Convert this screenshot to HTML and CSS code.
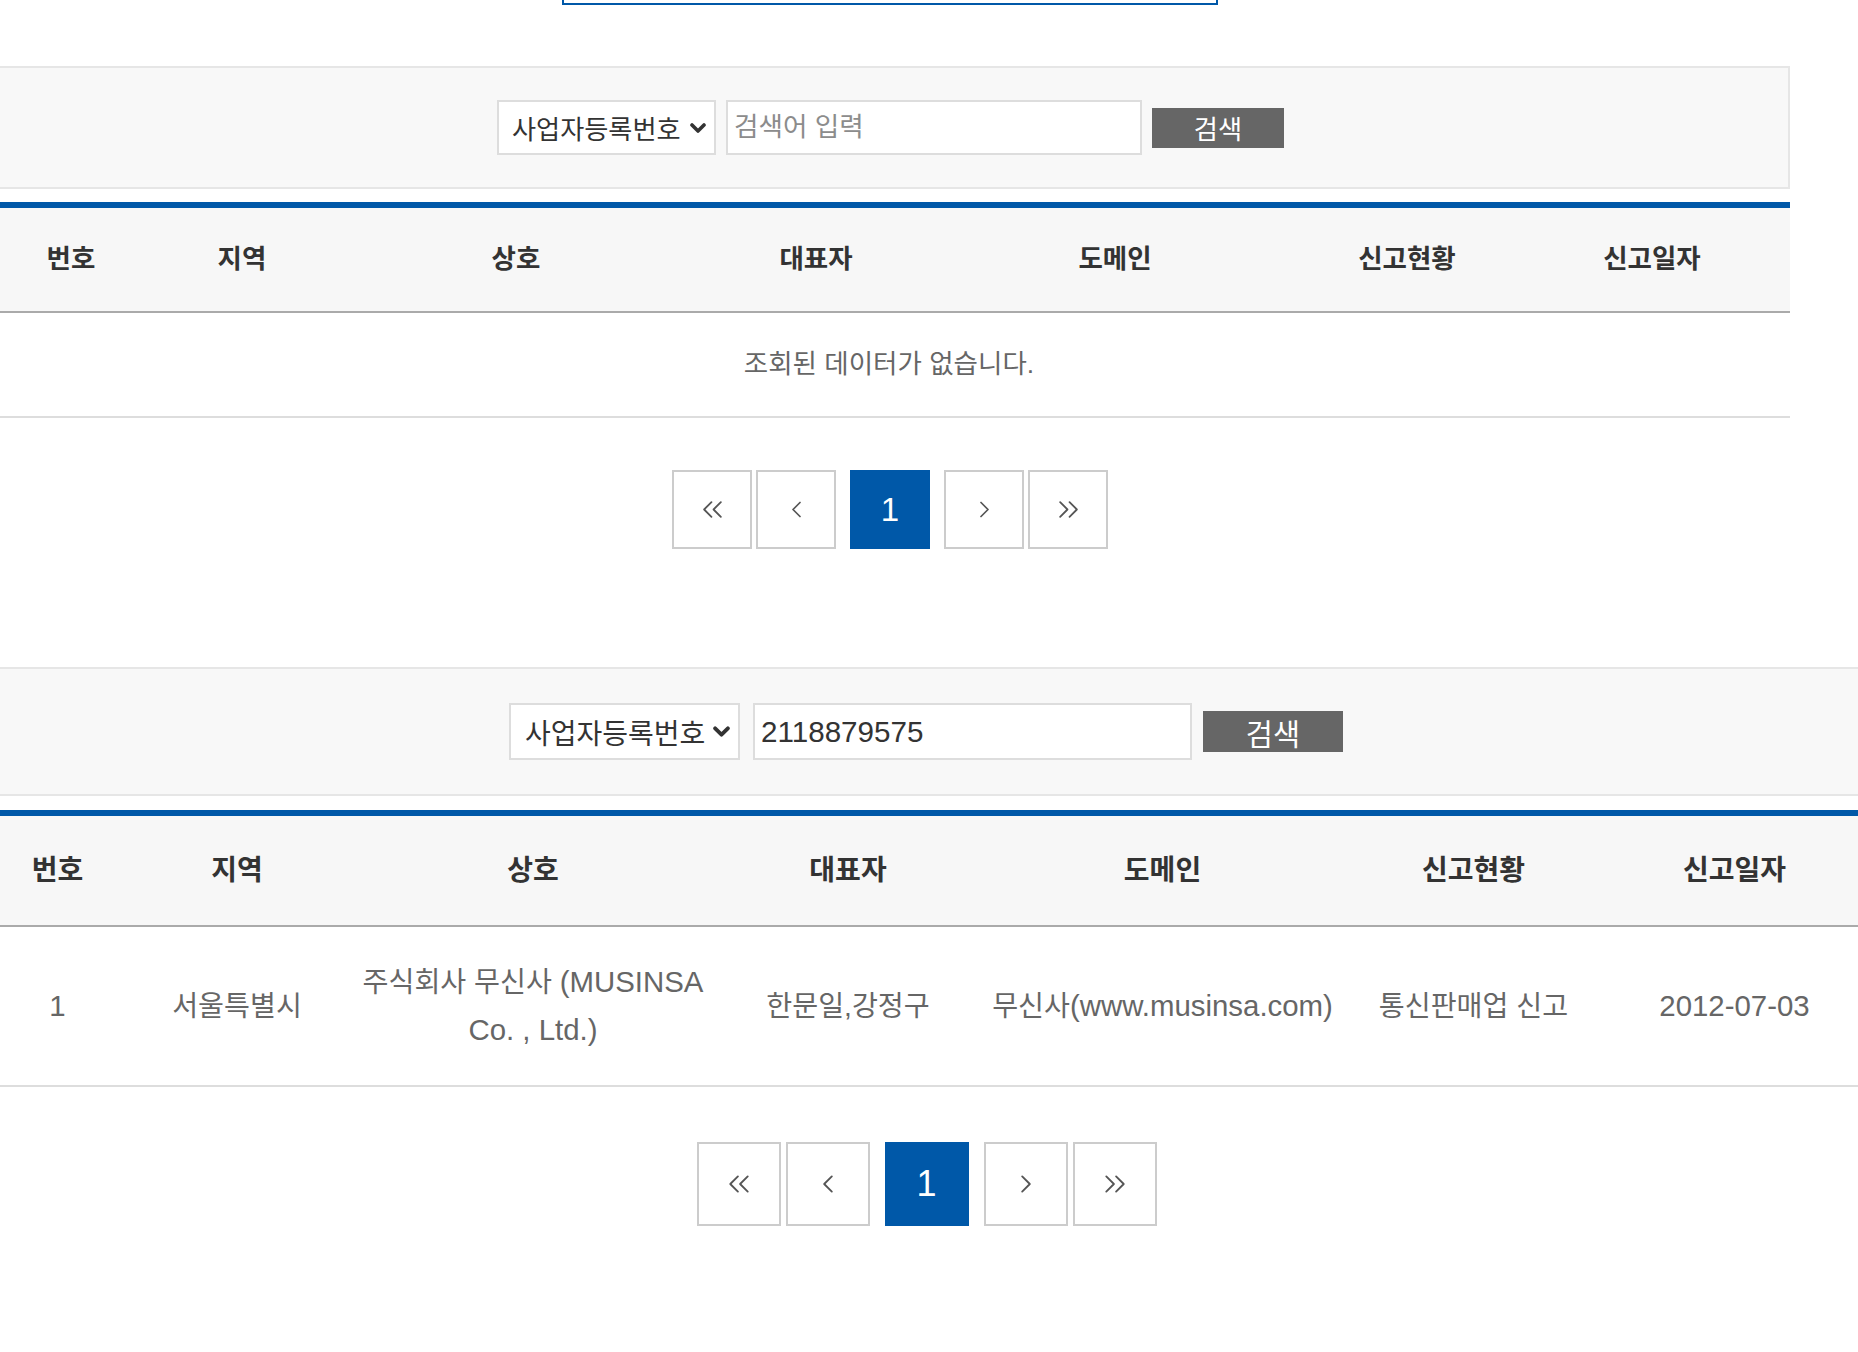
FILE: index.html
```html
<!DOCTYPE html>
<html lang="ko">
<head>
<meta charset="utf-8">
<title>통신판매사업자 조회</title>
<link rel="stylesheet" href="styles.css">
</head>
<body>
<div class="page">
  <div class="topfield"></div>

  <section class="board board-a">
    <div class="search">
      <div class="select"><span>사업자등록번호</span><svg class="caret" viewBox="0 0 16 10"><polyline points="2,2 8,8 14,2"/></svg></div>
      <input class="keyword" type="text" placeholder="검색어 입력">
      <button class="btn-search" type="button">검색</button>
    </div>
    <table class="list">
      <colgroup><col class="c1"><col class="c2"><col class="c3"><col class="c4"><col class="c5"><col class="c6"><col class="c7"></colgroup>
      <thead>
        <tr><th>번호</th><th>지역</th><th>상호</th><th>대표자</th><th>도메인</th><th>신고현황</th><th>신고일자</th></tr>
      </thead>
      <tbody>
        <tr><td class="empty" colspan="7">조회된 데이터가 없습니다.</td></tr>
      </tbody>
    </table>
    <nav class="pager">
      <a class="pg"><svg class="dbl" viewBox="0 0 22 16"><polyline points="10,1 3,8 10,15"/><polyline points="19,1 12,8 19,15"/></svg></a>
      <a class="pg"><svg class="sgl" viewBox="0 0 11 16"><polyline points="9,1 2,8 9,15"/></svg></a>
      <a class="pg on">1</a>
      <a class="pg"><svg class="sgl" viewBox="0 0 11 16"><polyline points="2,1 9,8 2,15"/></svg></a>
      <a class="pg"><svg class="dbl" viewBox="0 0 22 16"><polyline points="3,1 10,8 3,15"/><polyline points="12,1 19,8 12,15"/></svg></a>
    </nav>
  </section>

  <section class="board board-b">
    <div class="search">
      <div class="select"><span>사업자등록번호</span><svg class="caret" viewBox="0 0 16 10"><polyline points="2,2 8,8 14,2"/></svg></div>
      <input class="keyword" type="text" placeholder="검색어 입력" value="2118879575">
      <button class="btn-search" type="button">검색</button>
    </div>
    <table class="list">
      <colgroup><col class="c1"><col class="c2"><col class="c3"><col class="c4"><col class="c5"><col class="c6"><col class="c7"></colgroup>
      <thead>
        <tr><th>번호</th><th>지역</th><th>상호</th><th>대표자</th><th>도메인</th><th>신고현황</th><th>신고일자</th></tr>
      </thead>
      <tbody>
        <tr>
          <td><span class="en">1</span></td>
          <td>서울특별시</td>
          <td><span class="line">주식회사 무신사 <span class="en">(MUSINSA</span></span> <span class="line en">Co. , Ltd.)</span></td>
          <td>한문일,강정구</td>
          <td>무신사<span class="en">(www.musinsa.com)</span></td>
          <td>통신판매업 신고</td>
          <td><span class="en">2012-07-03</span></td>
        </tr>
      </tbody>
    </table>
    <nav class="pager">
      <a class="pg"><svg class="dbl" viewBox="0 0 22 16"><polyline points="10,1 3,8 10,15"/><polyline points="19,1 12,8 19,15"/></svg></a>
      <a class="pg"><svg class="sgl" viewBox="0 0 11 16"><polyline points="9,1 2,8 9,15"/></svg></a>
      <a class="pg on">1</a>
      <a class="pg"><svg class="sgl" viewBox="0 0 11 16"><polyline points="2,1 9,8 2,15"/></svg></a>
      <a class="pg"><svg class="dbl" viewBox="0 0 22 16"><polyline points="3,1 10,8 3,15"/><polyline points="12,1 19,8 12,15"/></svg></a>
    </nav>
  </section>
</div>
</body>
</html>
```
FILE: styles.css
```css
html, body {
  margin: 0;
  padding: 0;
  background: #fff;
}
body {
  font-family: "Liberation Sans", "Noto Sans CJK KR", sans-serif;
  color: #333;
}
.page {
  width: 1858px;
  padding-bottom: 128px;
}

/* remnant of the field above */
.topfield {
  box-sizing: border-box;
  width: 656px;
  height: 5px;
  margin-left: 562px;
  border: 2px solid #0058a8;
  border-top: 0;
}

/* sections */
.board-a { width: 1790px; margin-top: 61px; }
.board-b { width: 1858px; margin-top: 118px; }

/* search bar */
.search {
  box-sizing: border-box;
  display: flex;
  justify-content: center;
  align-items: center;
  background: #f8f8f8;
  border-top: 2px solid #e6e6e6;
  border-bottom: 2px solid #e6e6e6;
}
.board-a .search {
  height: 123px;
  border-right: 2px solid #e6e6e6;
  padding-right: 7px;
  gap: 10px;
}
.board-b .search {
  height: 129px;
  padding-right: 6px;
}
.board-b .keyword { margin-left: 13px; }
.board-b .btn-search { margin-left: 11px; }

.select {
  box-sizing: border-box;
  display: flex;
  align-items: center;
  justify-content: space-between;
  background: #fff;
  border: 2px solid #ddd;
  color: #333;
  white-space: nowrap;
}
.caret {
  flex: none;
  width: 16px;
  height: 10px;
  fill: none;
  stroke: #333;
  stroke-width: 3.6;
  stroke-linecap: round;
  stroke-linejoin: round;
}
.board-a .select { width: 219px; height: 55px; padding: 0 8px 0 13px; font-size: 26.2px; }
.board-b .select { width: 231px; height: 57px; padding: 0 8px 0 14px; font-size: 28px; }
.board-b .caret { width: 17px; height: 11px; }

.keyword {
  box-sizing: border-box;
  margin: 0;
  border: 2px solid #ddd;
  background: #fff;
  padding: 0 6px;
  font-family: inherit;
  color: #333;
  outline: none;
}
.keyword::placeholder { color: #8c8c8c; }
.board-a .keyword { width: 416px; height: 55px; font-size: 26.6px; }
.board-b .keyword { width: 439px; height: 57px; font-size: 29.6px; }

.btn-search {
  margin: 0;
  padding: 0;
  border: 0;
  background: #666;
  color: #fff;
  font-family: inherit;
}
.board-a .btn-search { width: 132px; height: 40px; font-size: 26.3px; }
.board-b .btn-search { width: 140px; height: 41px; font-size: 29.5px; }

/* table */
.list {
  border-collapse: separate;
  border-spacing: 0;
  table-layout: fixed;
  border-top: 6px solid #0058a8;
}
.board-a .list { width: 1790px; margin-top: 13px; }
.board-b .list { width: 1858px; margin-top: 14px; }

.board-a .c1 { width: 142px; }
.board-a .c2 { width: 200px; }
.board-a .c3 { width: 348px; }
.board-a .c4 { width: 252px; }
.board-a .c5 { width: 346px; }
.board-a .c6 { width: 238px; }
.board-a .c7 { width: 264px; }

.board-b .c1 { width: 115px; }
.board-b .c2 { width: 244px; }
.board-b .c3 { width: 348px; }
.board-b .c4 { width: 282px; }
.board-b .c5 { width: 347px; }
.board-b .c6 { width: 275px; }
.board-b .c7 { width: 247px; }

.list th {
  padding: 0;
  background: #f7f7f7;
  border-bottom: 2px solid #aaa;
  color: #333;
  font-weight: bold;
  text-align: center;
  white-space: nowrap;
}
.board-a .list th { line-height: 103px; font-size: 26.5px; }
.board-a .list th:last-child { padding-right: 12px; }
.board-b .list th { line-height: 109px; font-size: 28px; }

.list td {
  text-align: center;
  vertical-align: middle;
  border-bottom: 2px solid #ddd;
  color: #666;
  background: #fff;
}
.board-a .list td.empty {
  padding: 0 12px 0 0;
  line-height: 103px;
  font-size: 26.5px;
}
.board-b .list td {
  padding: 31px 0;
  font-size: 28.2px;
  line-height: 47px;
}
.line { display: inline-block; white-space: nowrap; }
.en { font-size: 29.4px; }

/* pagination */
.pager {
  display: flex;
  justify-content: center;
}
.board-a .pager { margin-top: 52px; gap: 4px; padding-right: 10px; }
.board-b .pager { margin-top: 55px; gap: 5px; padding-right: 5px; }

.pg {
  box-sizing: border-box;
  display: flex;
  align-items: center;
  justify-content: center;
  border: 2px solid #ccc;
  background: #fff;
  color: #555;
}
.board-a .pg { width: 80px; height: 79px; }
.board-b .pg { width: 84px; height: 84px; }
.pg.on {
  margin: 0 10px;
  background: #0058a8;
  border-color: #0058a8;
  color: #fff;
  line-height: 1;
}
.board-a .pg.on { font-size: 33px; }
.board-b .pg.on { font-size: 36px; }

.pg svg {
  fill: none;
  stroke: #555;
  stroke-width: 1.7;
  stroke-linecap: round;
  stroke-linejoin: round;
}
.pg .sgl { width: 11px; height: 17px; }
.pg .dbl { width: 23px; height: 17px; }
.board-b .pg .sgl { width: 12px; height: 18px; }
.board-b .pg .dbl { width: 24px; height: 18px; }
```
